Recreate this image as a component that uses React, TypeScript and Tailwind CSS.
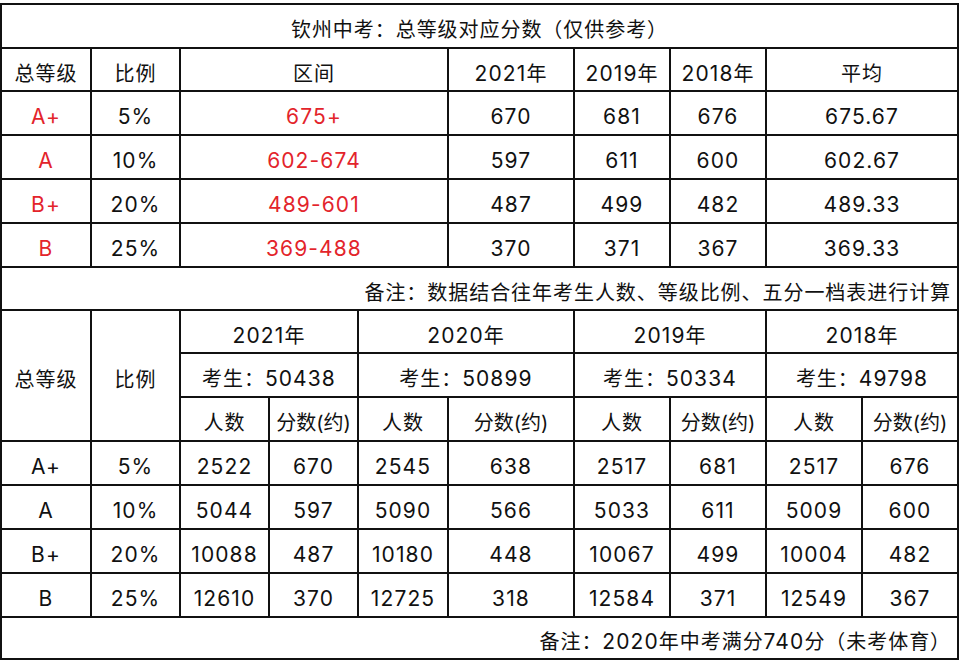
import { Fragment } from 'react'

const red = 'text-[#e3242b]'

const topRows = [
  { grade: 'A+', ratio: '5%', range: '675+', y21: '670', y19: '681', y18: '676', avg: '675.67' },
  { grade: 'A', ratio: '10%', range: '602-674', y21: '597', y19: '611', y18: '600', avg: '602.67' },
  { grade: 'B+', ratio: '20%', range: '489-601', y21: '487', y19: '499', y18: '482', avg: '489.33' },
  { grade: 'B', ratio: '25%', range: '369-488', y21: '370', y19: '371', y18: '367', avg: '369.33' },
]

const years = [
  { year: '2021年', total: '50438' },
  { year: '2020年', total: '50899' },
  { year: '2019年', total: '50334' },
  { year: '2018年', total: '49798' },
]

const bottomRows = [
  { grade: 'A+', ratio: '5%', cells: ['2522', '670', '2545', '638', '2517', '681', '2517', '676'] },
  { grade: 'A', ratio: '10%', cells: ['5044', '597', '5090', '566', '5033', '611', '5009', '600'] },
  { grade: 'B+', ratio: '20%', cells: ['10088', '487', '10180', '448', '10067', '499', '10004', '482'] },
  { grade: 'B', ratio: '25%', cells: ['12610', '370', '12725', '318', '12584', '371', '12549', '367'] },
]

const cell = 'border-2 border-[#111] p-0 pt-[8px] text-center align-middle'

// 数字和拉丁字母比中文稍宽，单独调整字号和字距
function T({ children }: { children: string }) {
  const parts = children.split(/([\x20-\x7e]+)/).filter(Boolean)
  return (
    <>
      {parts.map((p, i) =>
        /^[\x20-\x7e]+$/.test(p) ? (
          <span key={i} className="text-[21px] tracking-[1.1px]">{p}</span>
        ) : (
          <Fragment key={i}>{p}</Fragment>
        ),
      )}
    </>
  )
}

export default function App() {
  return (
    <div
      className="min-h-[661px] bg-white pt-[3px] text-[20px] tracking-[0.95px] text-[#111]"
      style={{ fontFamily: 'Inter, "Noto Sans CJK SC", sans-serif' }}
    >
      <table className="w-[957px] table-fixed border-collapse">
        <colgroup>
          <col className="w-[90px]" />
          <col className="w-[89px]" />
          <col className="w-[89px]" />
          <col className="w-[89px]" />
          <col className="w-[90px]" />
          <col className="w-[126px]" />
          <col className="w-[96px]" />
          <col className="w-[96px]" />
          <col className="w-[96px]" />
          <col className="w-[96px]" />
        </colgroup>
        <tbody>
          {/* 标题 */}
          <tr className="h-[44px]">
            <td colSpan={10} className={cell}>
              钦州中考：总等级对应分数（仅供参考）
            </td>
          </tr>
          <tr className="h-[43px]">
            <td className={cell}>总等级</td>
            <td className={cell}>比例</td>
            <td colSpan={3} className={cell}>区间</td>
            <td className={cell}><T>2021年</T></td>
            <td className={cell}><T>2019年</T></td>
            <td className={cell}><T>2018年</T></td>
            <td colSpan={2} className={cell}>平均</td>
          </tr>
          {topRows.map((r) => (
            <tr key={r.grade} className="h-[44px]">
              <td className={`${cell} ${red}`}><T>{r.grade}</T></td>
              <td className={cell}><T>{r.ratio}</T></td>
              <td colSpan={3} className={`${cell} ${red}`}><T>{r.range}</T></td>
              <td className={cell}><T>{r.y21}</T></td>
              <td className={cell}><T>{r.y19}</T></td>
              <td className={cell}><T>{r.y18}</T></td>
              <td colSpan={2} className={cell}><T>{r.avg}</T></td>
            </tr>
          ))}
          <tr className="h-[43px]">
            <td colSpan={10} className={`${cell} !text-right pr-[6px]`}>
              备注：数据结合往年考生人数、等级比例、五分一档表进行计算
            </td>
          </tr>

          {/* 历年人数 */}
          <tr className="h-[43px]">
            <td rowSpan={3} className={cell}>总等级</td>
            <td rowSpan={3} className={cell}>比例</td>
            {years.map((y) => (
              <td key={y.year} colSpan={2} className={cell}>
                <T>{y.year}</T>
              </td>
            ))}
          </tr>
          <tr className="h-[44px]">
            {years.map((y) => (
              <td key={y.year} colSpan={2} className={cell}>
                <T>{'考生：' + y.total}</T>
              </td>
            ))}
          </tr>
          <tr className="h-[44px]">
            {years.map((y) => [
              <td key={y.year + 'n'} className={cell}>人数</td>,
              <td key={y.year + 's'} className={`${cell} tracking-[0px]`}>分数(约)</td>,
            ])}
          </tr>
          {bottomRows.map((r) => (
            <tr key={r.grade} className="h-[44px]">
              <td className={cell}><T>{r.grade}</T></td>
              <td className={cell}><T>{r.ratio}</T></td>
              {r.cells.map((c, i) => (
                <td key={i} className={cell}><T>{c}</T></td>
              ))}
            </tr>
          ))}
          <tr className="h-[42px]">
            <td colSpan={10} className={`${cell} !text-right pr-[6px]`}>
              <T>备注：2020年中考满分740分（未考体育）</T>
            </td>
          </tr>
        </tbody>
      </table>
    </div>
  )
}
